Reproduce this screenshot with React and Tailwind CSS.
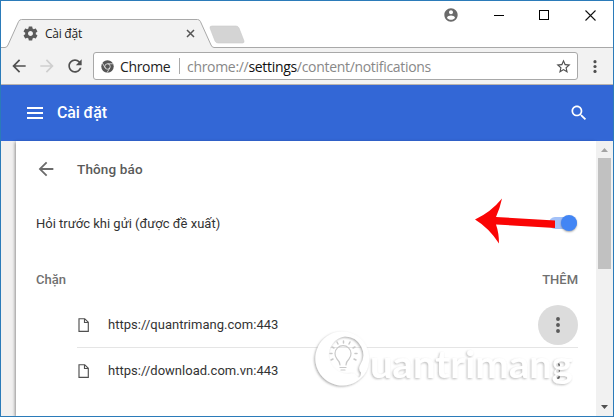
import React from 'react';

const ARROW_LEFT = 'M20 11H7.83l5.59-5.59L12 4l-8 8 8 8 1.41-1.41L7.83 13H20v-2z';

function Icon({ d, className }) {
  return (
    <svg viewBox="0 0 24 24" className={className} fill="currentColor">
      <path d={d} />
    </svg>
  );
}

function Dots({ className }) {
  return (
    <svg viewBox="0 0 4 16" className={className} fill="currentColor">
      <circle cx="2" cy="2" r="1.95" />
      <circle cx="2" cy="8" r="1.95" />
      <circle cx="2" cy="14" r="1.95" />
    </svg>
  );
}

function TabStrip() {
  return (
    <div className="relative flex h-[47px] shrink-0 bg-white">
      <svg className="absolute left-0 top-0" width="612" height="47" viewBox="1 1 612 47">
        <path d="M0 47.5H5Q7 47.5 8 45L18.6 21.5Q19.5 19.5 21.5 19.5H197.500Q199.500 19.500 200.400 21.500L211 45Q212 47.500 214 47.500H614V49H0Z" fill="#f2f2f2" stroke="#a9a9a9" />
        <path d="M212 26H236Q238 26 239 28L244 41Q244.500 43 242.500 43H218Q216 43 215 41L210 28Q209.500 26 212 26Z" fill="#d4d4d4" stroke="#c9c9c9" strokeWidth=".6" />
      </svg>
      <div className="relative ml-[21px] mt-[19px] flex h-[27px] w-[176px] items-center">
        <Icon
          className="h-[17px] w-[17px] text-[#5a5a5a]"
          d="M19.43 12.98c.04-.32.07-.64.07-.98s-.03-.66-.07-.98l2.110-1.650c.19-.15.24-.42.12-.64l-2-3.460c-.12-.22-.39-.3-.61-.22l-2.490 1c-.52-.4-1.080-.73-1.690-.98l-.38-2.650C14.460 2.180 14.250 2 14 2h-4c-.25 0-.46.18-.49.42l-.38 2.650c-.61.25-1.170.59-1.690.98l-2.490-1c-.23-.09-.49 0-.61.22l-2 3.460c-.13.22-.07.49.12.64l2.110 1.650c-.04.32-.07.65-.07.98s.03.66.07.98l-2.110 1.650c-.19.15-.24.42-.12.64l2 3.460c.12.22.39.3.61.22l2.490-1c.52.4 1.080.73 1.690.98l.38 2.650c.03.24.24.42.49.42h4c.25 0 .46-.18.49-.42l.38-2.650c.61-.25 1.170-.59 1.690-.98l2.490 1c.23.09.49 0 .61-.22l2-3.460c.12-.22.07-.49-.12-.64l-2.110-1.650zM12 15.500c-1.930 0-3.500-1.570-3.500-3.500s1.570-3.500 3.500-3.500 3.500 1.570 3.500 3.500-1.570 3.500-3.500 3.500z"
        />
        <span className="ml-[6px] text-[12px] leading-4 tracking-[-0.25px] text-[#222]">Cài đặt</span>
        <svg className="ml-auto mr-[3px] h-[9px] w-[9px]" viewBox="0 0 9 9" stroke="#555" strokeWidth="1.5">
          <path d="M1 1l7 7M8 1l-7 7" />
        </svg>
      </div>
      <div className="relative ml-auto mr-[17px] flex h-7 items-center">
        <Icon className="mr-[35px] h-4 w-4 text-[#6b6b6b]" d="M12 2C6.480 2 2 6.480 2 12s4.480 10 10 10 10-4.480 10-10S17.520 2 12 2zm0 3c1.660 0 3 1.340 3 3s-1.340 3-3 3-3-1.340-3-3 1.340-3 3-3zm0 14.200c-2.500 0-4.710-1.280-6-3.220.03-1.990 4-3.080 6-3.080 1.990 0 5.970 1.090 6 3.080-1.290 1.940-3.500 3.220-6 3.220z" />
        <span className="mr-[35px] h-px w-[10px] bg-black" />
        <span className="mr-[36px] h-[10px] w-[10px] border border-black" />
        <svg className="h-[11px] w-[11px]" viewBox="0 0 11 11" stroke="#111" strokeWidth="1.1">
          <path d="M.5.5l10 10M10.500.5l-10 10" />
        </svg>
      </div>
    </div>
  );
}

function Toolbar() {
  return (
    <div className="flex h-[37px] shrink-0 items-center border-b border-[#b9b3ae] bg-[#f2f2f2] text-[#505050]">
      <Icon className="ml-[8px] h-5 w-5" d={ARROW_LEFT} />
      <Icon className="ml-[8px] h-5 w-5 rotate-180 text-[#cfcfcf]" d={ARROW_LEFT} />
      <Icon className="ml-[8px] h-5 w-5" d="M17.650 6.350C16.200 4.900 14.210 4 12 4c-4.420 0-7.990 3.580-7.990 8s3.570 8 7.990 8c3.730 0 6.840-2.550 7.730-6h-2.080c-.82 2.330-3.040 4-5.650 4-3.310 0-6-2.690-6-6s2.690-6 6-6c1.660 0 3.140.69 4.220 1.780L13 11h7V4l-2.350 2.350z" />
      <div className="ml-[8px] flex h-[28px] w-[485px] items-center rounded-[3px] border border-[#a8a8a8] bg-white">
        <svg className="ml-[7px] h-[13px] w-[13px]" viewBox="0 0 24 24">
          <circle cx="12" cy="12" r="11.500" fill="#555" />
          <g fill="none" stroke="#e9e9e9" strokeWidth="1.500">
            <circle cx="12" cy="12" r="5" />
            <path d="M12 7h10.500M7.670 14.500L2.400 5.400M16.330 14.500L11 23.600" />
          </g>
        </svg>
        <span className="ml-[6px] w-[50px] whitespace-nowrap text-[14px] tracking-[-0.35px] text-[#222]">Chrome</span>
        <span className="ml-[9px] h-4 w-px bg-[#aaa]" />
        <span className="ml-[7px] whitespace-nowrap text-[14px] tracking-[-0.31px] text-[#888]">
          chrome://<span className="text-[#111]">settings</span>/content/notifications
        </span>
        <Icon className="ml-auto mr-[5px] h-[17px] w-[17px]" d="M22 9.240l-7.190-.62L12 2 9.190 8.630 2 9.240l5.460 4.730L5.820 21 12 17.270 18.180 21l-1.630-7.030L22 9.240zM12 15.400l-3.760 2.270 1-4.280-3.320-2.880 4.380-.38L12 6.100l1.710 4.040 4.380.38-3.320 2.880 1 4.280L12 15.400z" />
      </div>
      <Dots className="ml-[15px] h-[13px] w-[4px]" />
    </div>
  );
}

function SiteRow({ url, active }) {
  return (
    <div className="flex h-[46px] items-center">
      <svg className="ml-[1px] h-[14px] w-[11px]" viewBox="0 0 11 14" fill="none" stroke="#505050" strokeWidth="1.150">
        <path d="M1 .7H6.700L10.300 4.300V13.300H1ZM6.500.7V4.500H10.300" />
      </svg>
      <span className="ml-[19px] text-[13px] tracking-[0.02px] text-[#333]">{url}</span>
      <span className={active ? 'ml-auto flex h-10 w-10 items-center justify-center rounded-full bg-[#dcdcdc]' : 'ml-auto flex h-10 w-10 items-center justify-center'}>
        <Dots className="h-4 w-4 text-[#5a5a5a]" />
      </span>
    </div>
  );
}

function Watermark() {
  return (
    <svg className="absolute left-[307px] top-[323px]" width="278" height="72" viewBox="308 324 278 72">
      <defs>
        <filter id="relief" x="-10%" y="-20%" width="120%" height="140%">
          <feDropShadow dx="-1" dy="1" stdDeviation=".8" floodColor="#777" floodOpacity=".6" />
        </filter>
      </defs>
      <g filter="url(#relief)">
        <path fillRule="evenodd" d="M342 331.500a27 27 0 1 0 19 46.500Q368 372 369 362A27 27 0 0 0 342 331.500ZM345 336.500a18.500 18.500 0 0 1 15 29q-2 4 1 7q0 5-3 5q-3-5-8-4a18.500 18.500 0 1 1-5-37Z" fill="white" />
      </g>
      <g fill="none" stroke="#c9c9c9" strokeWidth="1.500" strokeLinecap="round">
        <path d="M340 365q0-3-3-6a8 8 0 1 1 12 0q-3 3-3 6M340 367.500h6M341 370h4" strokeWidth="1.200" />
        <path d="M343.500 343v-2M338 344l-1-2M349 344l1-2M334 348l-2-1M353 348l2-1M332 353.500h-2M355 353.500h2M333 359l-2 1M354 359l2 1" />
      </g>
      <g filter="url(#relief)" opacity=".8">
        <text x="370" y="378" textLength="203" lengthAdjust="spacingAndGlyphs" className="font-['Lato'] text-[38px] font-bold" fill="white">uantrimang</text>
      </g>
    </svg>
  );
}

export default function App() {
  return (
    <div className="relative flex h-[417px] w-[614px] flex-col overflow-hidden border border-[#2b7bb9] bg-white font-['Open_Sans','Noto_Sans',sans-serif]">
      <TabStrip />
      <Toolbar />
      <header className="flex h-[56px] shrink-0 items-center bg-[#3367d6] font-['Roboto',sans-serif] text-white">
        <svg className="ml-[26px] h-[12px] w-4" viewBox="0 0 16 12" fill="white">
          <path d="M0 0h16v2H0zM0 5h16v2H0zM0 10h16v2H0z" />
        </svg>
        <h1 className="ml-[14px] text-[16px] font-medium tracking-[-0.15px]">Cài đặt</h1>
        <Icon className="ml-auto mr-[24px] h-5 w-5" d="M15.500 14h-.79l-.28-.27C15.410 12.590 16 11.110 16 9.500 16 5.910 13.090 3 9.500 3S3 5.910 3 9.500 5.910 16 9.500 16c1.610 0 3.090-.59 4.230-1.570l.27.28v.79l5 4.990L20.490 19l-4.990-5zm-6 0C7.010 14 5 11.990 5 9.500S7.010 5 9.500 5 14 7.010 14 9.500 11.990 14 9.500 14z" />
      </header>
      <div className="flex min-h-0 flex-1 bg-[#f1f0f0] font-['Roboto',sans-serif]">
        <main className="ml-[15px] flex w-[580px] flex-col bg-white pl-[20px] pr-[18px] shadow-[-1px_1px_3px_rgba(0,0,0,.4)]">
          <div className="flex h-[56px] shrink-0 items-center">
            <Icon className="-ml-[1px] h-[22px] w-[22px] text-[#6b6b6b]" d={ARROW_LEFT} />
            <h2 className="ml-[20px] text-[13.5px] font-medium tracking-[0.15px] text-[#5a5a5a]">Thông báo</h2>
          </div>
          <div className="flex h-[53px] shrink-0 items-center justify-between text-[13px] text-[#333]">
            <span>Hỏi trước khi gửi (được đề xuất)</span>
            <span className="mb-px mr-px flex h-3 w-[28px] items-center justify-end rounded-full bg-[#a3c1f8]">
              <span className="h-4 w-4 rounded-full bg-[#4285f4] shadow-[0_1px_2px_rgba(0,0,0,.35)]" />
            </span>
          </div>
          <div className="mt-[5px] flex h-[50px] shrink-0 items-center justify-between text-[13px] font-medium text-[#707070]">
            <span>Chặn</span>
            <span>THÊM</span>
          </div>
          <div className="-mt-[3px] ml-[41px] divide-y divide-[#e5e5e5]">
            <SiteRow url="https://quantrimang.com:443" active />
            <SiteRow url="https://download.com.vn:443" />
          </div>
        </main>
        <div className="flex w-[17px] flex-col items-center bg-[#f1f1f1]">
          <svg className="h-[17px] w-[15px] shrink-0" viewBox="0 0 15 17"><path d="M4 11h7L7.500 7z" fill="#a3a3a3" /></svg>
          <span className="h-[111px] w-[13px] shrink-0 bg-[#c1c1c1]" />
          <svg className="mt-auto h-[17px] w-[15px] shrink-0" viewBox="0 0 15 17"><path d="M4 6h7l-3.500 4z" fill="#505050" /></svg>
        </div>
      </div>
      <Watermark />
      <svg className="absolute left-[474px] top-[197px]" width="82" height="47" viewBox="475 198 82 47">
        <path d="M475 219.500Q491 212 502 198.500Q500 208 496 217L555 220.500V228L496 224.500Q499 233 499 243.500Q489 228 475 219.500Z" fill="#fa0505" />
      </svg>
    </div>
  );
}
